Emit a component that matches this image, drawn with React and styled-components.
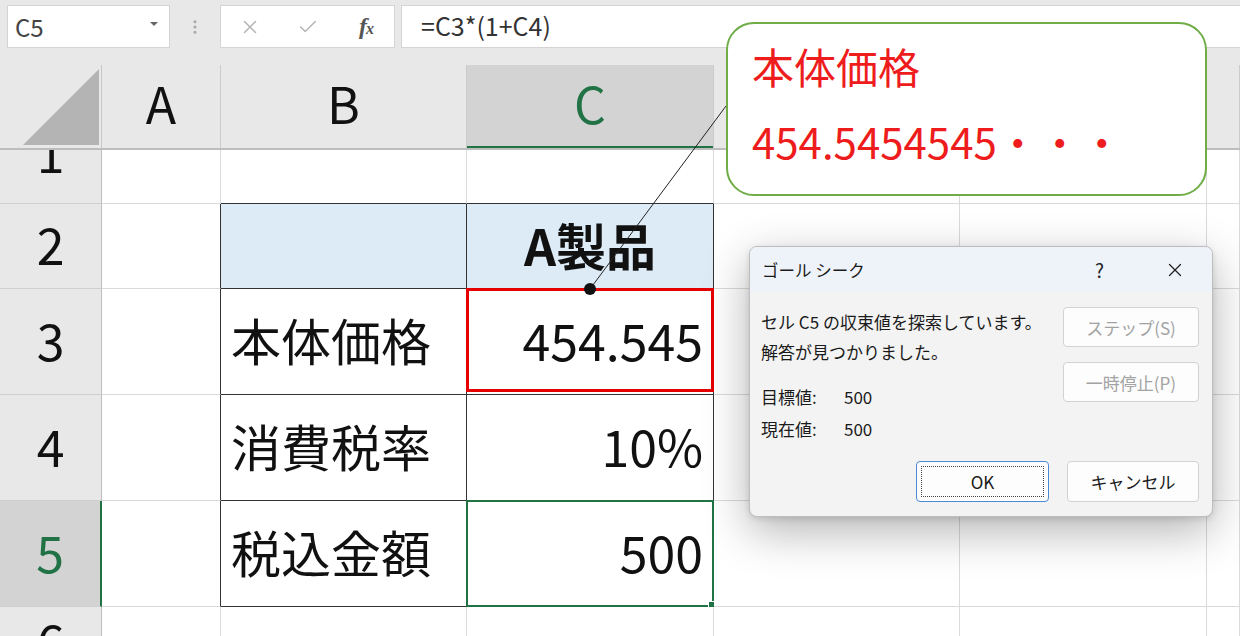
import React from 'react';
import styled, { createGlobalStyle } from 'styled-components';
import { X, Check, EllipsisVertical } from 'lucide-react';

const GlobalStyle = createGlobalStyle`
  html, body {
    margin: 0;
    padding: 0;
    background: #fff;
  }
  body {
    font-family: "Noto Sans CJK JP", "Noto Sans", sans-serif;
  }
`;

const COLS = '102px 119px 246px 247px 246px 247px 1fr';
const ROWS = '100px 85px 106px 106px 106px 72px';

const Page = styled.div`
  position: relative;
  width: 1240px;
  height: 636px;
  overflow: hidden;
  background: #fff;
  display: flex;
  flex-direction: column;
`;

/* ---------- formula bar ---------- */

const FormulaBar = styled.div`
  flex: none;
  height: 65px;
  box-sizing: border-box;
  padding: 5px 0 0 7px;
  background: #e8e8e8;
  display: flex;
  align-items: flex-start;
`;

const Box = styled.div`
  height: 43px;
  box-sizing: border-box;
  background: #fff;
  border: 1px solid #d4d4d4;
  display: flex;
  align-items: center;
`;

const NameBox = styled(Box)`
  width: 163px;
  padding: 0 11px 0 7px;
  justify-content: space-between;
  font-size: 24px;
  color: #444;
`;

const Caret = styled.span`
  width: 0;
  height: 0;
  border-left: 4px solid transparent;
  border-right: 4px solid transparent;
  border-top: 4px solid #666;
  margin-top: -6px;
`;

const Grip = styled.div`
  width: 50px;
  height: 43px;
  display: flex;
  align-items: center;
  justify-content: center;
  color: #a8a8a8;
`;

const FxBox = styled(Box)`
  width: 175px;
  display: grid;
  grid-template-columns: repeat(3, 58px);
  justify-items: center;
  color: #b4b4b4;
`;

const FxMark = styled.span`
  font-family: "Liberation Serif", serif;
  font-style: italic;
  font-weight: 700;
  font-size: 24px;
  color: #555;
  letter-spacing: -1px;

  small {
    font-size: 16px;
  }
`;

const FormulaInput = styled(Box)`
  flex: 1;
  margin-left: 6px;
  border-right: none;
  padding: 0 0 4px 19px;
  font-size: 25px;
  color: #333;
`;

/* ---------- sheet ---------- */

const ColHeadRow = styled.div`
  flex: none;
  height: 85px;
  box-sizing: border-box;
  display: grid;
  grid-template-columns: ${COLS};
  background: #e8e8e8;
  border-bottom: 2px solid #bdbdbd;
`;

const Corner = styled.div`
  display: flex;
  align-items: flex-end;
  justify-content: flex-end;
  padding: 0 2px 3px 0;
  border-right: 1px solid #c8c8c8;
`;

const CornerTriangle = styled.div`
  width: 76px;
  height: 76px;
  background: #b4b4b4;
  clip-path: polygon(100% 0, 100% 100%, 0 100%);
`;

const ColHead = styled.div`
  display: flex;
  align-items: center;
  justify-content: center;
  padding-bottom: 10px;
  border-right: 1px solid #cbcbcb;
  font-size: 50px;
  color: ${p => (p.$active ? '#217346' : '#111')};
  background: ${p => (p.$active ? '#d3d3d3' : 'transparent')};
  box-shadow: ${p => (p.$active ? 'inset 0 -2px 0 #217346' : 'none')};
`;

const Viewport = styled.div`
  flex: 1;
  overflow: hidden;
`;

/* the sheet is scrolled a little: row 1 is partly hidden under the headers */
const Body = styled.div`
  margin-top: -46px;
  display: grid;
  grid-template-columns: ${COLS};
  grid-template-rows: ${ROWS};
`;

const RowHead = styled.div`
  box-sizing: border-box;
  display: flex;
  align-items: center;
  justify-content: center;
  padding-bottom: 6px;
  font-size: 50px;
  background: ${p => (p.$active ? '#d3d3d3' : '#e8e8e8')};
  color: ${p => (p.$active ? '#217346' : '#111')};
  border-bottom: 1px solid #cfcfcf;
  border-right: ${p => (p.$active ? '2px solid #217346' : '1px solid #bdbdbd')};
`;

const Cell = styled.div`
  position: relative;
  box-sizing: border-box;
  display: flex;
  align-items: center;
  justify-content: ${p =>
    p.$align === 'right' ? 'flex-end' : p.$align === 'center' ? 'center' : 'flex-start'};
  padding: 0 10px 5px;
  background: ${p => p.$fill || '#fff'};
  border-right: 1px solid ${p => (p.$dr ? '#333' : '#dadada')};
  border-bottom: 1px solid ${p => (p.$db ? '#333' : '#dadada')};
  font-size: 50px;
  font-weight: ${p => (p.$bold ? 700 : 400)};
  color: #111;
  white-space: nowrap;
`;

const RedFrame = styled.span`
  position: absolute;
  left: -1px;
  right: -1px;
  top: -1px;
  bottom: 2px;
  border: 3px solid #e60000;
  pointer-events: none;
`;

const SelectFrame = styled.span`
  position: absolute;
  left: -1px;
  right: -1px;
  top: -1px;
  bottom: -1px;
  border: 2px solid #217346;
  pointer-events: none;
`;

const FillHandle = styled.span`
  position: absolute;
  right: -5px;
  bottom: -5px;
  width: 7px;
  height: 7px;
  background: #217346;
  border: 1px solid #fff;
`;

/* ---------- callout ---------- */

const Leader = styled.svg`
  position: absolute;
  left: 0;
  top: 0;
  pointer-events: none;
`;

const Callout = styled.div`
  position: absolute;
  left: 726px;
  top: 22px;
  width: 481px;
  height: 174px;
  box-sizing: border-box;
  padding: 4px 0 0 24px;
  background: #fff;
  border: 2px solid #70ad47;
  border-radius: 28px;
  color: #ee1c1c;
  font-size: 42px;
  line-height: 75px;
`;

/* ---------- goal seek dialog ---------- */

const Dialog = styled.div`
  position: absolute;
  left: 749px;
  top: 246px;
  width: 464px;
  height: 271px;
  box-sizing: border-box;
  display: flex;
  flex-direction: column;
  overflow: hidden;
  background: #f3f3f3;
  border: 1px solid #bdbdbd;
  border-radius: 8px;
  box-shadow: 0 14px 46px rgba(0, 0, 0, 0.3), 0 2px 6px rgba(0, 0, 0, 0.12);
  font-size: 17px;
  color: #1a1a1a;
`;

const TitleBar = styled.div`
  flex: none;
  height: 45px;
  display: flex;
  align-items: center;
  padding-left: 12px;
  background: #eef2f9;
`;

const Title = styled.div`
  flex: 1;
  font-size: 16.5px;
`;

const TitleButton = styled.div`
  width: 75px;
  height: 45px;
  display: flex;
  align-items: center;
  justify-content: center;
  font-size: 19px;
  color: #222;
`;

const DialogBody = styled.div`
  flex: 1;
  display: flex;
  flex-direction: column;
  padding: 15px 13px 14px 11px;
`;

const Upper = styled.div`
  display: grid;
  grid-template-columns: 1fr 136px;
`;

const Message = styled.div`
  line-height: 30px;
  white-space: nowrap;
`;

const ValueList = styled.div`
  margin-top: 14px;
`;

const ValueRow = styled.div`
  display: flex;
  line-height: 32px;
`;

const ValueLabel = styled.span`
  width: 83px;
`;

const SideButtons = styled.div`
  display: flex;
  flex-direction: column;
  gap: 15px;
`;

const Button = styled.div`
  position: relative;
  width: ${p => p.$w || 136}px;
  height: ${p => p.$h || 40}px;
  box-sizing: border-box;
  display: flex;
  align-items: center;
  justify-content: center;
  background: #fdfdfd;
  border: ${p => (p.$primary ? '1.5px solid #4a8ad4' : '1px solid #d2d2d2')};
  border-radius: 4px;
  color: ${p => (p.$disabled ? '#a3a3a3' : '#1a1a1a')};
  font-size: 17px;

  ${p =>
    p.$primary &&
    `
    &::after {
      content: '';
      position: absolute;
      inset: 4px;
      border: 1px dotted #444;
    }
  `}
`;

const Footer = styled.div`
  margin-top: auto;
  display: flex;
  justify-content: flex-end;
  gap: 18px;
`;

const rows = [
  { n: 1, cells: [{}, { db: 1 }, { db: 1 }, {}, {}, {}] },
  {
    n: 2,
    cells: [
      { dr: 1 },
      { dr: 1, db: 1, fill: '#ddebf7' },
      { dr: 1, db: 1, fill: '#ddebf7', text: 'A製品', align: 'center', bold: 1 },
      {}, {}, {},
    ],
  },
  {
    n: 3,
    cells: [
      { dr: 1 },
      { dr: 1, db: 1, text: '本体価格' },
      { dr: 1, db: 1, text: '454.545', align: 'right', mark: 'red' },
      {}, {}, {},
    ],
  },
  {
    n: 4,
    cells: [
      { dr: 1 },
      { dr: 1, db: 1, text: '消費税率' },
      { dr: 1, db: 1, text: '10%', align: 'right' },
      {}, {}, {},
    ],
  },
  {
    n: 5,
    active: true,
    cells: [
      { dr: 1 },
      { dr: 1, db: 1, text: '税込金額' },
      { dr: 1, db: 1, text: '500', align: 'right', mark: 'select' },
      {}, {}, {},
    ],
  },
  { n: 6, cells: [{}, {}, {}, {}, {}, {}] },
];

const columns = ['A', 'B', 'C', '', '', ''];

export default function App() {
  return (
    <Page>
      <GlobalStyle />
      <FormulaBar>
        <NameBox>
          C5
          <Caret />
        </NameBox>
        <Grip>
          <EllipsisVertical size={18} strokeWidth={2} />
        </Grip>
        <FxBox>
          <X size={22} strokeWidth={1.6} />
          <Check size={22} strokeWidth={1.6} />
          <FxMark>
            f<small>x</small>
          </FxMark>
        </FxBox>
        <FormulaInput>=C3*(1+C4)</FormulaInput>
      </FormulaBar>

      <ColHeadRow>
        <Corner>
          <CornerTriangle />
        </Corner>
        {columns.map((c, i) => (
          <ColHead key={i} $active={c === 'C'}>
            {c}
          </ColHead>
        ))}
      </ColHeadRow>

      <Viewport>
        <Body>
          {rows.map(r => (
            <React.Fragment key={r.n}>
              <RowHead $active={r.active}>{r.n}</RowHead>
              {r.cells.map((c, i) => (
                <Cell
                  key={i}
                  $dr={c.dr}
                  $db={c.db}
                  $fill={c.fill}
                  $align={c.align}
                  $bold={c.bold}
                >
                  {c.text}
                  {c.mark === 'red' && <RedFrame />}
                  {c.mark === 'select' && (
                    <SelectFrame>
                      <FillHandle />
                    </SelectFrame>
                  )}
                </Cell>
              ))}
            </React.Fragment>
          ))}
        </Body>
      </Viewport>

      <Leader width="1240" height="636" viewBox="0 0 1240 636">
        <line x1="726" y1="106" x2="590" y2="289" stroke="#222" strokeWidth="1" />
        <circle cx="590" cy="289" r="6" fill="#111" />
      </Leader>

      <Callout>
        <div>本体価格</div>
        <div>454.5454545・・・</div>
      </Callout>

      <Dialog>
        <TitleBar>
          <Title>ゴール シーク</Title>
          <TitleButton>?</TitleButton>
          <TitleButton>
            <X size={22} strokeWidth={1.4} />
          </TitleButton>
        </TitleBar>
        <DialogBody>
          <Upper>
            <div>
              <Message>
                セル C5 の収束値を探索しています。
                <br />
                解答が見つかりました。
              </Message>
              <ValueList>
                <ValueRow>
                  <ValueLabel>目標値:</ValueLabel>
                  <span>500</span>
                </ValueRow>
                <ValueRow>
                  <ValueLabel>現在値:</ValueLabel>
                  <span>500</span>
                </ValueRow>
              </ValueList>
            </div>
            <SideButtons>
              <Button $disabled>ステップ(S)</Button>
              <Button $disabled>一時停止(P)</Button>
            </SideButtons>
          </Upper>
          <Footer>
            <Button $primary $w={133} $h={41}>OK</Button>
            <Button $w={132} $h={41}>キャンセル</Button>
          </Footer>
        </DialogBody>
      </Dialog>
    </Page>
  );
}
